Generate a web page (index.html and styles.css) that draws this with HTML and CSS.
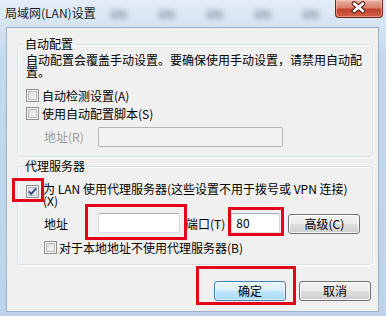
FILE: index.html
```html
<!DOCTYPE html>
<html lang="zh-CN">
<head>
<meta charset="utf-8">
<title>局域网(LAN)设置</title>
<link rel="stylesheet" href="styles.css">
</head>
<body>
<div class="window">
  <div class="titlebar">
    <span class="title">局域网(LAN)设置</span>
    <div class="glass">
      <span class="blob"></span><span class="blob"></span><span class="blob"></span><span class="blob"></span><span class="blob"></span>
    </div>
    <div class="close">
      <svg width="48" height="18" viewBox="0 0 48 18">
        <path d="M19.5 4.5 L28.5 12 M28.5 4.5 L19.5 12" stroke="#5b1c15" stroke-width="5" stroke-linecap="round"/>
        <path d="M19.5 4.5 L28.5 12 M28.5 4.5 L19.5 12" stroke="#ffffff" stroke-width="2.8" stroke-linecap="round"/>
      </svg>
    </div>
  </div>
  <div class="client">
    <fieldset class="group g1">
      <legend>自动配置</legend>
      <div class="desc">
        <div class="line">自动配置会覆盖手动设置。要确保使用手动设置，请禁用自动配</div>
        <div class="line">置。</div>
      </div>
      <div class="check r1"><span class="cb"></span><span class="ctext">自动检测设置(A)</span></div>
      <div class="check r2"><span class="cb"></span><span class="ctext">使用自动配置脚本(S)</span></div>
      <div class="field r3"><span class="flabel disabled">地址(R)</span><span class="input off wide"></span></div>
    </fieldset>
    <fieldset class="group g2">
      <legend>代理服务器</legend>
      <div class="check proxy">
        <span class="cb checked"><svg width="11" height="11" viewBox="0 0 11 11"><path d="M2 5.5 L4.3 8 L9 2.3" fill="none" stroke="#34497e" stroke-width="1.9"/></svg></span>
        <div class="ptext">
          <div class="line">为 LAN 使用代理服务器(这些设置不用于拨号或 VPN 连接)</div>
          <div class="line">(X)</div>
        </div>
      </div>
      <div class="field addr">
        <span class="flabel">地址</span>
        <span class="input addr-in"></span>
        <span class="port-l">端口(T)</span>
        <span class="input port-in">80</span>
        <span class="btn adv">高级(C)</span>
      </div>
      <div class="check bypass"><span class="cb"></span><span class="ctext">对于本地地址不使用代理服务器(B)</span></div>
    </fieldset>
    <div class="buttons">
      <span class="btn default">确定</span>
      <span class="btn">取消</span>
    </div>
  </div>
</div>
<div class="mark m1"></div>
<div class="mark m2"></div>
<div class="mark m3"></div>
<div class="mark m4"></div>
</body>
</html>
```

FILE: styles.css
```css
* { box-sizing: border-box; }
html, body { margin: 0; padding: 0; }
body {
  width: 386px;
  height: 316px;
  overflow: hidden;
  position: relative;
  font-family: "Noto Sans CJK SC", "Noto Sans", sans-serif;
  font-size: 12px;
  color: #000;
  background: linear-gradient(180deg, #e4edf7 0px, #d5e3f2 26px, #c3d7ed 60px, #bed3eb 100%);
}
.window { display: flex; flex-direction: column; height: 316px; }

.titlebar {
  height: 27px;
  display: flex;
  align-items: flex-start;
  flex: none;
}
.title {
  margin-top: 6px;
  padding-left: 5px;
  line-height: 14px;
  color: #1b1b1b;
  white-space: nowrap;
}
.glass {
  display: flex;
  gap: 31px;
  margin-left: 14px;
  margin-top: 10px;
}
.blob {
  width: 17px;
  height: 9px;
  background: rgba(125, 135, 150, 0.45);
  filter: blur(2.5px);
  border-radius: 2px;
}
.close {
  margin-left: auto;
  margin-right: 3px;
  width: 48px;
  height: 18px;
  border: 1px solid #6d271e;
  border-top: none;
  border-radius: 0 0 4px 4px;
  background: linear-gradient(180deg, #eab4a6 0%, #d9806b 45%, #c5412d 55%, #d1604a 100%);
  box-shadow: inset 0 0 0 1px rgba(255, 220, 210, 0.45);
  display: flex;
}
.close svg { display: block; margin: -1px 0 0 -1px; }

.client {
  margin-left: 6px;
  width: 373px;
  height: 285px;
  flex: none;
  background: #f0f0f0;
  border: 1px solid #9db1c9;
  display: flex;
  flex-direction: column;
}

.group {
  margin: 10px 5px 0 10px;
  border: 1px solid #d5dfe5;
  border-radius: 3px;
  box-shadow: inset 1px 1px 0 #ffffff, 1px 1px 0 #ffffff;
  min-inline-size: 0;
}
.group legend {
  font-size: 12px;
  line-height: 12px;
  padding: 0 1px;
  margin-left: -2px;
  background: #f0f0f0;
  white-space: nowrap;
}
.g1 { padding: 4px 8px 9px 8px; }
.g2 { margin-top: 3px; padding: 11px 8px 10px 8px; }

.line {
  height: 12px;
  line-height: 12px;
  white-space: nowrap;
}

.check { display: flex; align-items: center; white-space: nowrap; }
.check .ctext { line-height: 12px; margin-left: 3px; }
.r1 { height: 17px; margin-top: 9px; }
.r2 { height: 17px; margin-top: 1px; }

.cb {
  flex: none;
  width: 13px;
  height: 13px;
  border: 1px solid #8e8f8f;
  background: linear-gradient(135deg, #d6d6d6 0%, #eeeeee 60%, #fbfbfb 100%);
  box-shadow: inset 0 0 0 1px #f7f7f7, inset 0 0 0 2px #b9bdc2;
  display: flex;
}
.cb.checked {
  background: linear-gradient(135deg, #cfd8e6 0%, #e9eef5 60%, #f8fafc 100%);
}
.cb svg { display: block; margin: 0; }

.field { display: flex; align-items: center; white-space: nowrap; }
.flabel {
  width: 54px;
  margin-left: 18px;
  line-height: 12px;
  flex: none;
}
.flabel.disabled { color: #9c9c9c; }
.r3 { height: 20px; margin-top: 5px; }

.input {
  flex: none;
  height: 20px;
  background: #ffffff;
  border: 1px solid #abadb3;
  border-left-color: #d4d7dd;
  border-right-color: #d4d7dd;
  border-bottom-color: #dfe3e9;
  border-radius: 2px;
  line-height: 18px;
  padding-left: 4px;
}
.input.off {
  background: #f2f2f2;
  border-color: #b2b6ba;
}
.wide { width: 185px; }

.proxy { align-items: flex-start; }
.proxy .cb { margin-top: 2px; }
.ptext { margin-left: 4px; }

.addr { height: 21px; margin-top: 6px; align-items: flex-start; }
.addr .flabel { margin-top: 5px; }
.addr-in { width: 82px; }
.port-l { margin-left: 6px; margin-top: 5px; line-height: 12px; }
.port-in { width: 49px; margin-left: 6px; }
.adv { margin-left: 8px; margin-top: 1px; width: 72px; }

.bypass { height: 13px; margin-top: 7px; margin-left: 18px; }
.bypass .ctext { margin-left: 2px; }

.btn {
  flex: none;
  height: 20px;
  display: flex;
  align-items: center;
  justify-content: center;
  border: 1px solid #707070;
  border-radius: 3px;
  background: linear-gradient(180deg, #f3f3f3 0%, #ebebeb 48%, #dddddd 52%, #cfcfcf 100%);
  box-shadow: inset 0 0 0 1px rgba(255, 255, 255, 0.75);
  line-height: 12px;
  white-space: nowrap;
}
.btn.default {
  border-color: #3c7fb1;
  background: linear-gradient(180deg, #eaf6fd 0%, #d7effc 48%, #bde6fd 52%, #a6d9f4 100%);
  box-shadow: inset 0 0 0 1px rgba(255, 255, 255, 0.6);
}

.buttons {
  display: flex;
  justify-content: flex-end;
  gap: 13px;
  margin-top: 16px;
  padding-right: 7px;
}
.buttons .btn { width: 72px; }

.mark {
  position: absolute;
  border: 3px solid #e3061a;
}
.m1 { left: 12px; top: 178px; width: 32px; height: 24px; }
.m2 { left: 85px; top: 204px; width: 102px; height: 36px; }
.m3 { left: 228px; top: 207px; width: 56px; height: 29px; }
.m4 { left: 196px; top: 266px; width: 100px; height: 39px; }
```
